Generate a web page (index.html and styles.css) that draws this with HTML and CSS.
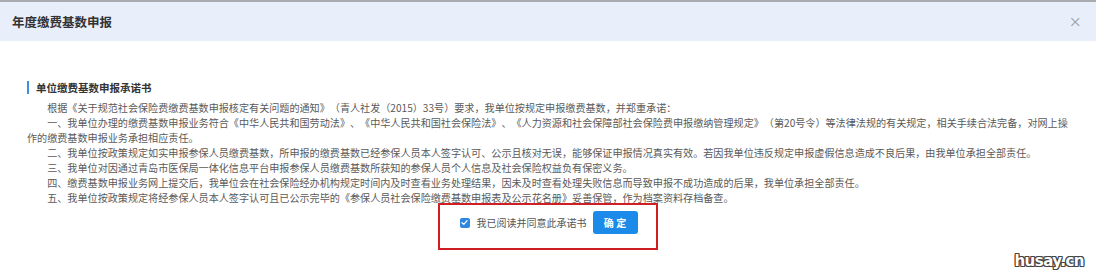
FILE: index.html
```html
<!DOCTYPE html>
<html lang="zh">
<head>
<meta charset="utf-8">
<link rel="stylesheet" href="styles.css">
</head>
<body>
<div class="dialog">
  <div class="header">
    <span class="title">年度缴费基数申报</span>
    <span class="close">×</span>
  </div>
  <div class="content">
    <div class="section-title">单位缴费基数申报承诺书</div>
    <div class="body">
      <p>根据《关于规范社会保险费缴费基数申报核定有关问题的通知》（青人社发（2015）33号）要求，我单位按规定申报缴费基数，并郑重承诺：</p>
      <p>一、我单位办理的缴费基数申报业务符合《中华人民共和国劳动法》、《中华人民共和国社会保险法》、《人力资源和社会保障部社会保险费申报缴纳管理规定》（第20号令）等法律法规的有关规定，相关手续合法完备，对网上操作的缴费基数申报业务承担相应责任。</p>
      <p>二、我单位按政策规定如实申报参保人员缴费基数，所申报的缴费基数已经参保人员本人签字认可、公示且核对无误，能够保证申报情况真实有效。若因我单位违反规定申报虚假信息造成不良后果，由我单位承担全部责任。</p>
      <p>三、我单位对因通过青岛市医保局一体化信息平台申报参保人员缴费基数所获知的参保人员个人信息及社会保险权益负有保密义务。</p>
      <p>四、缴费基数申报业务网上提交后，我单位会在社会保险经办机构规定时间内及时查看业务处理结果，因未及时查看处理失败信息而导致申报不成功造成的后果，我单位承担全部责任。</p>
      <p>五、我单位按政策规定将经参保人员本人签字认可且已公示完毕的《参保人员社会保险缴费基数申报表及公示花名册》妥善保管，作为档案资料存档备查。</p>
    </div>
    <div class="footer">
      <div class="confirm-box">
        <label class="agree">
          <span class="checkbox">
            <svg viewBox="0 0 10 10" width="9" height="9"><path d="M2.2 5.2 L4.2 7.1 L7.9 3" fill="none" stroke="#fff" stroke-width="1.4" stroke-linecap="round" stroke-linejoin="round"/></svg>
          </span>
          <span class="agree-text">我已阅读并同意此承诺书</span>
        </label>
        <button class="btn">确 定</button>
      </div>
    </div>
  </div>
  <div class="watermark">husay.cn</div>
</div>
</body>
</html>
```

FILE: styles.css
```css
html, body {
  margin: 0;
  padding: 0;
  background: #ffffff;
}
body {
  font-family: "Noto Sans CJK SC", "Noto Sans", sans-serif;
  width: 1096px;
  height: 277px;
  overflow: hidden;
  text-spacing-trim: space-all;
}
.dialog {
  position: relative;
  width: 1096px;
  height: 277px;
}
.header {
  box-sizing: border-box;
  height: 41px;
  border-top: 2px solid #a9abb0;
  background: #e9eefb;
  display: flex;
  align-items: center;
  justify-content: space-between;
  padding: 0 14px 0 12px;
}
.title {
  font-size: 12.5px;
  font-weight: bold;
  color: #333;
}
.close {
  font-family: "DejaVu Sans", sans-serif;
  font-size: 16px;
  color: #8a8f99;
  font-weight: 300;
}
.content {
  padding: 40px 28px 0 27px;
}
.section-title {
  border-left: 2px solid #3d8fe0;
  padding-left: 7px;
  font-size: 10.5px;
  font-weight: bold;
  color: #333;
  line-height: 13px;
}
.body {
  margin-top: 6px;
  font-size: 10.1px;
  line-height: 15px;
  color: #5a5a5a;
}
.body p {
  margin: 0;
  text-indent: 2em;
}
.footer {
  display: flex;
  justify-content: center;
  margin-top: -2px;
}
.confirm-box {
  box-sizing: border-box;
  width: 220px;
  height: 47px;
  border: 2px solid #cf1f23;
  display: flex;
  align-items: center;
  justify-content: center;
  gap: 6px;
  padding-bottom: 8px;
  padding-left: 2px;
}
.agree {
  display: flex;
  align-items: center;
  gap: 7px;
}
.checkbox {
  width: 10px;
  height: 10px;
  border-radius: 2px;
  background: #2f86e0;
  display: flex;
  align-items: center;
  justify-content: center;
}
.agree-text {
  font-size: 10px;
  color: #555;
}
.btn {
  width: 45px;
  height: 23px;
  border: none;
  border-radius: 3px;
  background: #1b8ae8;
  color: #fff;
  font-family: "Noto Sans CJK SC", sans-serif;
  font-size: 10px;
  font-weight: bold;
  padding: 0;
}
.watermark {
  position: absolute;
  right: 12px;
  bottom: 7px;
  font-family: "DejaVu Sans", sans-serif;
  font-weight: bold;
  font-size: 15px;
  letter-spacing: -0.5px;
  color: #fff;
  text-shadow: 1px 0 0 #444, -1px 0 0 #444, 0 1px 0 #444, 0 -1px 0 #444, 1px 1px 0 #444, -1px -1px 0 #444, 1px -1px 0 #444, -1px 1px 0 #444;
}
```
